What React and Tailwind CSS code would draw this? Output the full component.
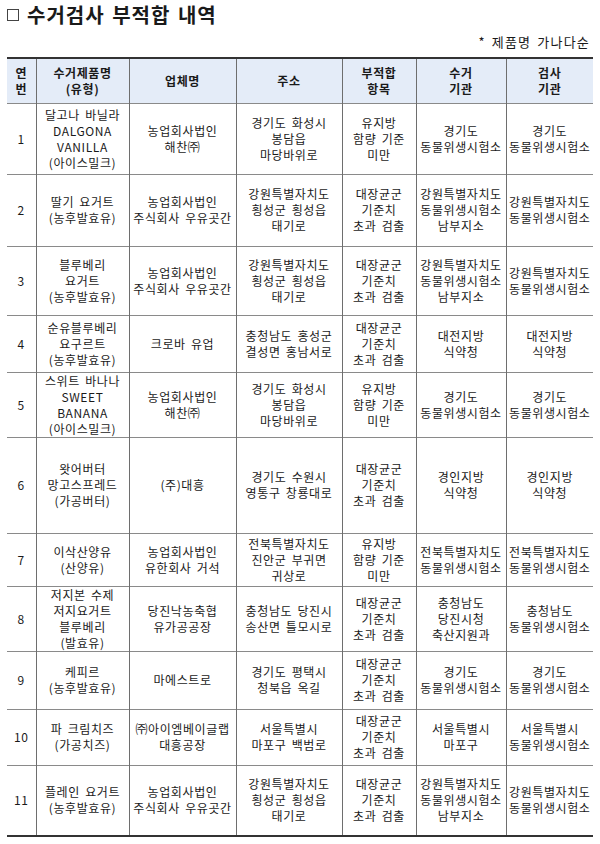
import React from 'react';

const rows = [
  {
    no: '1', h: 'h-[71px]',
    product: ['달고나 바닐라', 'DALGONA', 'VANILLA', '(아이스밀크)'],
    company: ['농업회사법인', '해찬㈜'],
    address: ['경기도 화성시', '봉담읍', '마당바위로'],
    item: ['유지방', '함량 기준', '미만'],
    collector: ['경기도', '동물위생시험소'],
    inspector: ['경기도', '동물위생시험소'],
  },
  {
    no: '2', h: 'h-[72px]',
    product: ['딸기 요거트', '(농후발효유)'],
    company: ['농업회사법인', '주식회사 우유곳간'],
    address: ['강원특별자치도', '횡성군 횡성읍', '태기로'],
    item: ['대장균군', '기준치', '초과 검출'],
    collector: ['강원특별자치도', '동물위생시험소', '남부지소'],
    inspector: ['강원특별자치도', '동물위생시험소'],
  },
  {
    no: '3', h: 'h-[69px]',
    product: ['블루베리', '요거트', '(농후발효유)'],
    company: ['농업회사법인', '주식회사 우유곳간'],
    address: ['강원특별자치도', '횡성군 횡성읍', '태기로'],
    item: ['대장균군', '기준치', '초과 검출'],
    collector: ['강원특별자치도', '동물위생시험소', '남부지소'],
    inspector: ['강원특별자치도', '동물위생시험소'],
  },
  {
    no: '4', h: 'h-[57px]',
    product: ['순유블루베리', '요구르트', '(농후발효유)'],
    company: ['크로바 유업'],
    address: ['충청남도 홍성군', '결성면 홍남서로'],
    item: ['대장균군', '기준치', '초과 검출'],
    collector: ['대전지방', '식약청'],
    inspector: ['대전지방', '식약청'],
  },
  {
    no: '5', h: 'h-[64px]',
    product: ['스위트 바나나', 'SWEET', 'BANANA', '(아이스밀크)'],
    company: ['농업회사법인', '해찬㈜'],
    address: ['경기도 화성시', '봉담읍', '마당바위로'],
    item: ['유지방', '함량 기준', '미만'],
    collector: ['경기도', '동물위생시험소'],
    inspector: ['경기도', '동물위생시험소'],
  },
  {
    no: '6', h: 'h-[96px]',
    product: ['왓어버터', '망고스프레드', '(가공버터)'],
    company: ['(주)대흥'],
    address: ['경기도 수원시', '영통구 창룡대로'],
    item: ['대장균군', '기준치', '초과 검출'],
    collector: ['경인지방', '식약청'],
    inspector: ['경인지방', '식약청'],
  },
  {
    no: '7', h: 'h-[53px]',
    product: ['이삭산양유', '(산양유)'],
    company: ['농업회사법인', '유한회사 거석'],
    address: ['전북특별자치도', '진안군 부귀면', '귀상로'],
    item: ['유지방', '함량 기준', '미만'],
    collector: ['전북특별자치도', '동물위생시험소'],
    inspector: ['전북특별자치도', '동물위생시험소'],
  },
  {
    no: '8', h: 'h-[63px]',
    product: ['저지본 수제', '저지요거트', '블루베리', '(발효유)'],
    company: ['당진낙농축협', '유가공공장'],
    address: ['충청남도 당진시', '송산면 틀모시로'],
    item: ['대장균군', '기준치', '초과 검출'],
    collector: ['충청남도', '당진시청', '축산지원과'],
    inspector: ['충청남도', '동물위생시험소'],
  },
  {
    no: '9', h: 'h-[58px]',
    product: ['케피르', '(농후발효유)'],
    company: ['마에스트로'],
    address: ['경기도 평택시', '청북읍 옥길'],
    item: ['대장균군', '기준치', '초과 검출'],
    collector: ['경기도', '동물위생시험소'],
    inspector: ['경기도', '동물위생시험소'],
  },
  {
    no: '10', h: 'h-[56px]',
    product: ['파 크림치즈', '(가공치즈)'],
    company: ['㈜아이엠베이글랩', '대흥공장'],
    address: ['서울특별시', '마포구 백범로'],
    item: ['대장균군', '기준치', '초과 검출'],
    collector: ['서울특별시', '마포구'],
    inspector: ['서울특별시', '동물위생시험소'],
  },
  {
    no: '11', h: 'h-[71px]',
    product: ['플레인 요거트', '(농후발효유)'],
    company: ['농업회사법인', '주식회사 우유곳간'],
    address: ['강원특별자치도', '횡성군 횡성읍', '태기로'],
    item: ['대장균군', '기준치', '초과 검출'],
    collector: ['강원특별자치도', '동물위생시험소', '남부지소'],
    inspector: ['강원특별자치도', '동물위생시험소'],
  },
];

const Lines = ({ lines }) => (
  <>
    {lines.map((l, i) => (
      <div key={i} className="whitespace-nowrap">{l}</div>
    ))}
  </>
);

const Cell = ({ lines, last }) => (
  <td className={`border-t border-[#8a8a8a] px-0 text-center align-middle ${last ? '' : 'border-r border-r-[#6e6e6e]'}`}>
    <Lines lines={lines} />
  </td>
);

const Th = ({ lines, last }) => (
  <th className={`bg-[#e4ecf8] font-bold text-center align-middle ${last ? '' : 'border-r border-r-[#6e6e6e]'}`}>
    <Lines lines={lines} />
  </th>
);

export default function App() {
  return (
    <div
      className="w-[600px] h-[844px] bg-white text-[#1a1a1a] overflow-hidden"
      style={{ fontFamily: '"Malgun Gothic", "Noto Sans CJK KR", "Noto Sans", sans-serif' }}
    >
      <div className="px-[7px] pt-[2px]">
        <h1 className="flex items-center text-[20px] font-bold leading-[26px] tracking-[1px] [word-spacing:2px]">
          <span className="mr-[8px] inline-block w-[12px] h-[12px] border border-[#444]" />
          수거검사 부적합 내역
        </h1>
        <div className="mt-[5px] pr-[3px] text-right text-[13px] leading-[18px] tracking-[1.2px] [word-spacing:2px]">
          * 제품명 가나다순
        </div>
        <table className="mt-[6px] w-[586px] table-fixed border-collapse text-[12px] leading-[16px] tracking-[0.6px] [word-spacing:2px] border-t-2 border-t-[#333] border-b-2 border-b-[#333]">
          <colgroup>
            <col className="w-[29px]" />
            <col className="w-[93px]" />
            <col className="w-[107px]" />
            <col className="w-[106px]" />
            <col className="w-[74px]" />
            <col className="w-[90px]" />
            <col className="w-[87px]" />
          </colgroup>
          <thead>
            <tr className="h-[45px] border-b border-b-[#555]">
              <Th lines={['연', '번']} />
              <Th lines={['수거제품명', '(유형)']} />
              <Th lines={['업체명']} />
              <Th lines={['주소']} />
              <Th lines={['부적합', '항목']} />
              <Th lines={['수거', '기관']} />
              <Th lines={['검사', '기관']} last />
            </tr>
          </thead>
          <tbody>
            {rows.map((r) => (
              <tr key={r.no} className={r.h}>
                <Cell lines={[r.no]} />
                <Cell lines={r.product} />
                <Cell lines={r.company} />
                <Cell lines={r.address} />
                <Cell lines={r.item} />
                <Cell lines={r.collector} />
                <Cell lines={r.inspector} last />
              </tr>
            ))}
          </tbody>
        </table>
      </div>
    </div>
  );
}
